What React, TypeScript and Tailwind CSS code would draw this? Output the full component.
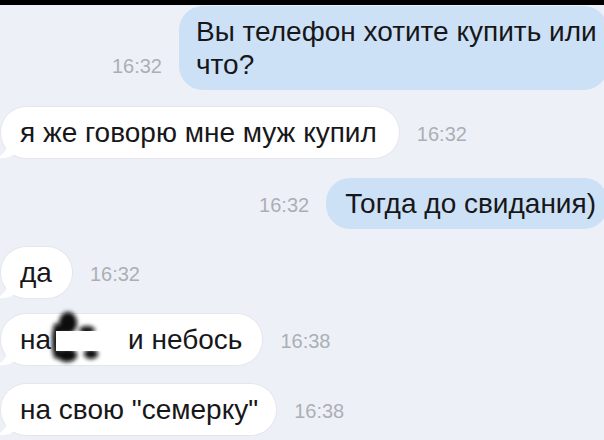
import React from "react";

const Time = ({ t, side }: { t: string; side: "l" | "r" }) => (
  <span
    className={`text-[20px] leading-none text-[#abafb5] mb-[14px] shrink-0 ${
      side === "l" ? "mr-[17px]" : "ml-[18px]"
    }`}
  >
    {t}
  </span>
);

const Tail = () => (
  <svg
    className="absolute left-[-5px] bottom-[-1px]"
    width="22"
    height="18"
    viewBox="0 0 22 18"
  >
    <path d="M12 0 C12 8 8 13 1 17 C9 18 16 16 21 11 L21 0 Z" fill="#ffffff" />
  </svg>
);

const Blot = () => (
  <span className="relative inline-block w-[77px] h-[33px] align-top">
    <svg
      className="absolute left-0 top-0 overflow-visible"
      width="77"
      height="33"
      viewBox="0 0 77 33"
    >
      <defs>
        <filter id="bl" x="-50%" y="-50%" width="200%" height="200%">
          <feGaussianBlur stdDeviation="2" />
        </filter>
      </defs>
      <g filter="url(#bl)" fill="#080808">
        <ellipse cx="17" cy="0" rx="9" ry="11" />
        <ellipse cx="11" cy="6" rx="7" ry="5" />
        <ellipse cx="5" cy="18" rx="4" ry="18" />
        <ellipse cx="36" cy="7" rx="8" ry="4" />
        <ellipse cx="16" cy="32" rx="10" ry="7" />
        <ellipse cx="40" cy="31" rx="7" ry="5" />
      </g>
      <rect x="5" y="8" width="46" height="20" fill="#ffffff" />
    </svg>
  </span>
);

const In = ({
  children,
  time,
  pr,
  mt,
}: {
  children: React.ReactNode;
  time: string;
  pr: string;
  mt: string;
}) => (
  <div className={`flex items-end ${mt}`}>
    <div
      className={`relative ml-[1px] bg-white rounded-[25px] pl-[19px] ${pr} py-[9px] text-[28px] leading-[33px] text-[#171719] whitespace-nowrap shadow-[0_0_0_1px_rgba(0,0,0,0.04)]`}
    >
      <Tail />
      <span className="relative">{children}</span>
    </div>
    <Time t={time} side="r" />
  </div>
);

export default function App() {
  return (
    <div className="w-[604px] h-[440px] overflow-hidden bg-[#edf1f7] font-['Liberation_Sans',Arial,sans-serif]">
      <div className="h-[5px] bg-black" />

      <div className="flex items-end justify-end mt-[1px] mr-[-4px]">
        <Time t="16:32" side="l" />
        <div className="w-[429px] shrink-0 bg-[#cde1f6] rounded-[24px] pl-[17px] pr-[10px] py-[9px] text-[28px] leading-[33px] text-[#171719] whitespace-nowrap">
          Вы телефон хотите купить или
          <br />
          что?
        </div>
      </div>

      <In time="16:32" pr="pr-[22px]" mt="mt-[17px]">
        я же говорю мне муж купил
      </In>

      <div className="flex items-end justify-end mt-[20px] mr-[-4px]">
        <Time t="16:32" side="l" />
        <div className="shrink-0 bg-[#cde1f6] rounded-[24px] pl-[19px] pr-[12px] py-[9px] text-[28px] leading-[33px] text-[#171719] whitespace-nowrap">
          Тогда до свидания)
        </div>
      </div>

      <In time="16:32" pr="pr-[20px]" mt="mt-[18px]">
        да
      </In>

      <In time="16:38" pr="pr-[20px]" mt="mt-[16px]">
        на
        <Blot />
        и небось
      </In>

      <In time="16:38" pr="pr-[18px]" mt="mt-[19px]">
        на свою "семерку"
      </In>
    </div>
  );
}
